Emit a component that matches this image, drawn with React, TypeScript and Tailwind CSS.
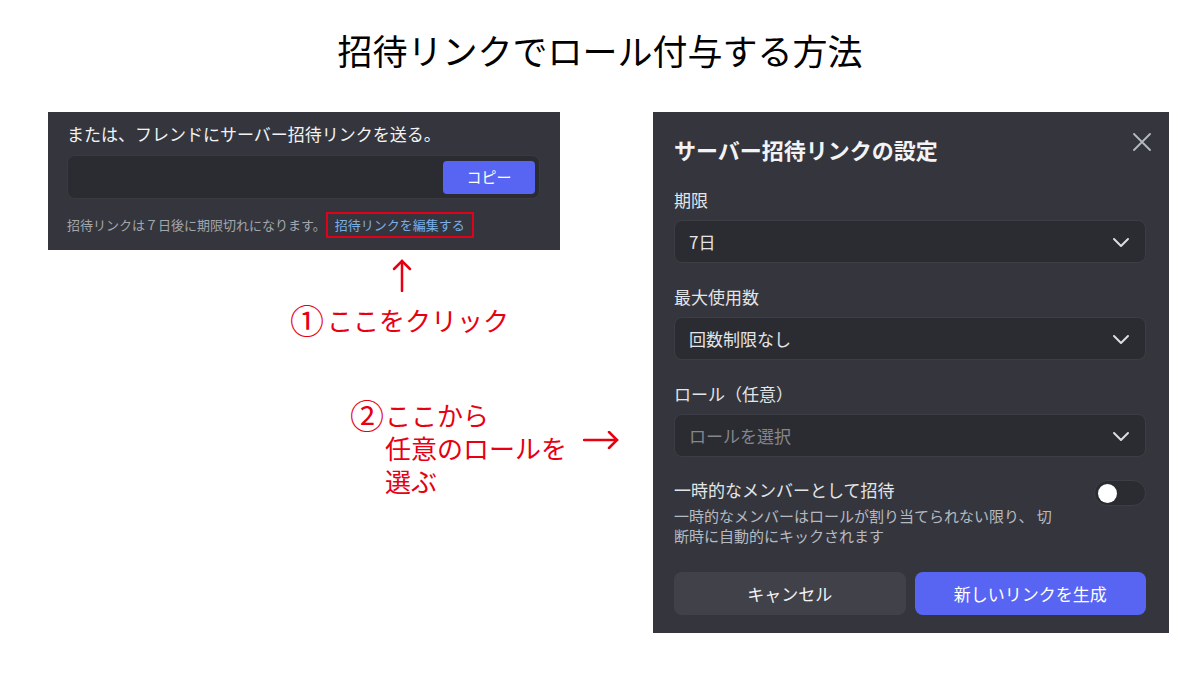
import React from 'react';

const FONT = '"Noto Sans CJK JP", "Noto Sans", sans-serif';

const Chevron = () => (
  <svg width="20" height="20" viewBox="0 0 20 20" fill="none" stroke="#dbdee1" strokeWidth="2" strokeLinecap="round" strokeLinejoin="round">
    <path d="M3 7l7 7 7-7" />
  </svg>
);

const SelectBox = ({ value, placeholder }: { value: string; placeholder?: boolean }) => (
  <div className="flex items-center justify-between h-[43px] pl-[14px] pr-[14px] rounded-lg bg-[#2b2c32] border border-[#3d3e45]">
    <span className={`text-[17px] leading-6 ${placeholder ? 'text-[#85878d]' : 'text-[#e3e5e8]'}`}>{value}</span>
    <Chevron />
  </div>
);

const Field = ({ label, children }: { label: string; children: React.ReactNode }) => (
  <div className="flex flex-col">
    <div className="text-[17px] leading-6 text-[#e3e5e8] mb-2">{label}</div>
    {children}
  </div>
);

export default function App() {
  return (
    <div className="w-[1200px] h-[678px] bg-white overflow-hidden" style={{ fontFamily: FONT }}>
      {/* Title */}
      <div className="pt-[25px] text-center text-[35px] leading-[50px] text-black">
        招待リンクでロール付与する方法
      </div>

      <div className="flex mt-[37px]">
        {/* Left column */}
        <div className="ml-[48px] w-[605px] flex flex-col">
          <div className="w-[512px] h-[138px] bg-[#35363d] pt-[10px] px-[19px]">
            <div className="text-[17px] leading-6 text-[#f2f3f5]">
              または、フレンドにサーバー招待リンクを送る。
            </div>
            <div className="mt-[9px] h-[44px] w-[473px] rounded-lg bg-[#2b2c31] border border-[#3a3b41] flex items-center justify-end pr-[4px]">
              <div className="w-[92px] h-[33px] rounded bg-[#5865f2] flex items-center justify-center text-[15px] text-white">
                コピー
              </div>
            </div>
            <div className="mt-[13px] flex items-center text-[13px] leading-[18px] text-[#a3a6ab]">
              <span>招待リンクは７日後に期限切れになります。</span>
              <span className="border-2 border-[#e3001b] px-[7px] py-[2px] text-[#7aaee6]">
                招待リンクを編集する
              </span>
            </div>
          </div>

          {/* annotation 1 */}
          <svg className="ml-[344px] mt-[8px]" width="20" height="34" viewBox="0 0 20 34" fill="none" stroke="#e60012" strokeWidth="2.5" strokeLinecap="round">
            <path d="M10 33V3" />
            <path d="M2 11l8-8 8 8" />
          </svg>
          <div className="ml-[242px] mt-[10px] flex items-center text-[#e60012] text-[26px] leading-9">
            <span className="text-[34px] leading-9 w-[37px]">①</span>
            <span>ここをクリック</span>
          </div>

          {/* annotation 2 */}
          <div className="ml-[302px] mt-[60px] flex items-start text-[#e60012] text-[26px] leading-[33px]">
            <span className="text-[34px] leading-[33px] w-[35px]">②</span>
            <div className="flex flex-col">
              <span>ここから</span>
              <span>任意のロールを</span>
              <span>選ぶ</span>
            </div>
            <svg className="ml-[16px] mt-[33px]" width="36" height="18" viewBox="0 0 36 18" fill="none" stroke="#e60012" strokeWidth="2.5" strokeLinecap="round">
              <path d="M1 9h33" />
              <path d="M26 1l8 8-8 8" />
            </svg>
          </div>
        </div>

        {/* Right panel */}
        <div className="w-[516px] h-[521px] bg-[#35363d] pt-[20px] pl-[21px] pr-[23px] flex flex-col">
          <div className="flex items-start justify-between">
            <div className="mt-[2px] text-[22px] leading-[30px] font-bold text-[#f2f3f5]">
              サーバー招待リンクの設定
            </div>
            <svg className="-mr-[5px] mt-[1px]" width="18" height="18" viewBox="0 0 18 18" fill="none" stroke="#b5bac1" strokeWidth="1.8" strokeLinecap="round">
              <path d="M1 1l16 16M17 1L1 17" />
            </svg>
          </div>

          <div className="mt-[24px] flex flex-col gap-[22px]">
            <Field label="期限">
              <SelectBox value="7日" />
            </Field>
            <Field label="最大使用数">
              <SelectBox value="回数制限なし" />
            </Field>
            <Field label="ロール（任意）">
              <SelectBox value="ロールを選択" placeholder />
            </Field>
          </div>

          <div className="mt-[21px] flex items-start justify-between">
            <div className="flex flex-col">
              <div className="text-[17px] leading-6 text-[#e3e5e8]">一時的なメンバーとして招待</div>
              <div className="mt-[4px] w-[392px] text-[15px] leading-5 text-[#b5bac1]">
                一時的なメンバーはロールが割り当てられない限り、 切断時に自動的にキックされます
              </div>
            </div>
            <div className="mt-[2px] w-[52px] h-[26px] rounded-full bg-[#2b2c31] border border-[#3d3e45] flex items-center pl-[3px]">
              <div className="w-[19px] h-[19px] rounded-full bg-white" />
            </div>
          </div>

          <div className="mt-[26px] flex gap-[9px]">
            <div className="flex-1 h-[43px] rounded-lg bg-[#414249] flex items-center justify-center text-[17px] text-[#f2f3f5]">
              キャンセル
            </div>
            <div className="flex-1 h-[43px] rounded-lg bg-[#5865f2] flex items-center justify-center text-[17px] text-white">
              新しいリンクを生成
            </div>
          </div>
        </div>
      </div>
    </div>
  );
}
